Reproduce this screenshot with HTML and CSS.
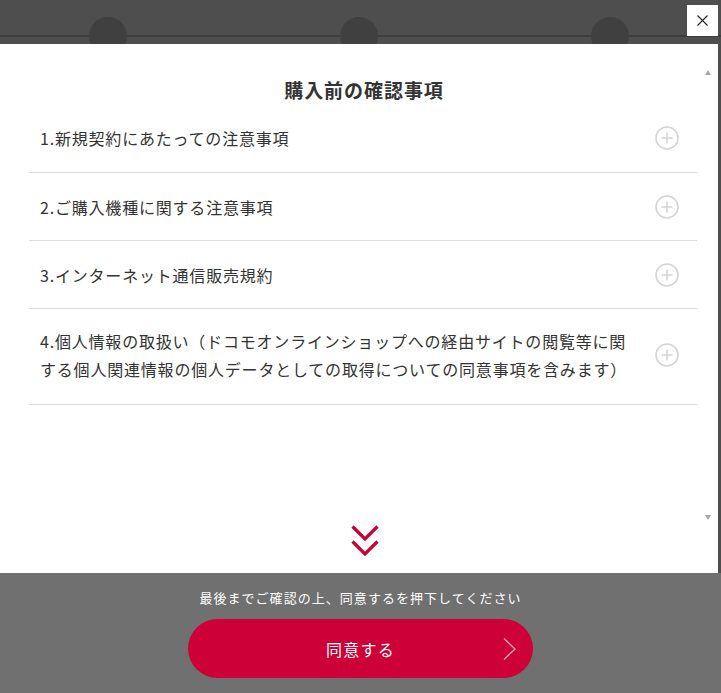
FILE: index.html
```html
<!DOCTYPE html>
<html lang="ja">
<head>
<meta charset="utf-8">
<title>購入前の確認事項</title>
<link rel="stylesheet" href="styles.css">
</head>
<body>
<div class="page">
  <header class="backdrop">
    <span class="dot"></span>
    <span class="dot"></span>
    <span class="dot"></span>
    <button class="close" aria-label="閉じる">
      <svg width="11" height="11" viewBox="0 0 11 11"><path d="M0.5 0.5 L10.5 10.5 M10.5 0.5 L0.5 10.5" stroke="#222" stroke-width="1.1" fill="none"/></svg>
    </button>
  </header>
  <main class="modal">
    <div class="content">
      <h1 class="title">購入前の確認事項</h1>
      <ul class="list">
        <li class="item"><span class="label">1.新規契約にあたっての注意事項</span><span class="plus"><svg width="24" height="24" viewBox="0 0 24 24"><circle cx="12" cy="12" r="11" stroke="#d4d4d4" stroke-width="1.6" fill="none"/><path d="M12 6.5 V17.5 M6.5 12 H17.5" stroke="#d4d4d4" stroke-width="1.6"/></svg></span></li>
        <li class="item"><span class="label">2.ご購入機種に関する注意事項</span><span class="plus"><svg width="24" height="24" viewBox="0 0 24 24"><circle cx="12" cy="12" r="11" stroke="#d4d4d4" stroke-width="1.6" fill="none"/><path d="M12 6.5 V17.5 M6.5 12 H17.5" stroke="#d4d4d4" stroke-width="1.6"/></svg></span></li>
        <li class="item"><span class="label">3.インターネット通信販売規約</span><span class="plus"><svg width="24" height="24" viewBox="0 0 24 24"><circle cx="12" cy="12" r="11" stroke="#d4d4d4" stroke-width="1.6" fill="none"/><path d="M12 6.5 V17.5 M6.5 12 H17.5" stroke="#d4d4d4" stroke-width="1.6"/></svg></span></li>
        <li class="item"><span class="label">4.個人情報の取扱い（ドコモオンラインショップへの経由サイトの閲覧等に関する個人関連情報の個人データとしての取得についての同意事項を含みます）</span><span class="plus"><svg width="24" height="24" viewBox="0 0 24 24"><circle cx="12" cy="12" r="11" stroke="#d4d4d4" stroke-width="1.6" fill="none"/><path d="M12 6.5 V17.5 M6.5 12 H17.5" stroke="#d4d4d4" stroke-width="1.6"/></svg></span></li>
      </ul>
      <div class="more">
        <svg width="28" height="31" viewBox="0 0 28 31"><path d="M1.5 1.5 L14 14 L26.5 1.5 M1.5 16.5 L14 29 L26.5 16.5" stroke="#cc0033" stroke-width="3.2" fill="none"/></svg>
      </div>
    </div>
    <div class="scrollbar">
      <span class="arrow up"></span>
      <span class="arrow down"></span>
    </div>
  </main>
  <footer class="footer">
    <p class="note">最後までご確認の上、同意するを押下してください</p>
    <button class="agree">
      <span>同意する</span>
      <svg class="chev" width="14" height="24" viewBox="0 0 14 24"><path d="M1 1.5 L12 12 L1 22.5" stroke="#f4a6bc" stroke-width="1.3" fill="none"/></svg>
    </button>
  </footer>
</div>
</body>
</html>
```
FILE: styles.css
```css
* { box-sizing: border-box; }
html, body {
  margin: 0;
  padding: 0;
}
body {
  background: #4d4d4d;
  font-family: "Noto Sans CJK JP", "Noto Sans", sans-serif;
  color: #333;
  overflow: hidden;
}
.page {
  width: 721px;
  height: 693px;
  display: flex;
  flex-direction: column;
}
.backdrop {
  position: relative;
  height: 44px;
  flex: none;
  overflow: hidden;
  display: flex;
  align-items: flex-start;
  gap: 213px;
  padding: 17px 0 0 89px;
  background: linear-gradient(to bottom, transparent 35px, #3e3e3e 35px, #3e3e3e 37px, transparent 37px), #4e4e4e;
}
.dot {
  width: 38px;
  height: 38px;
  border-radius: 50%;
  background: #404040;
  flex: none;
}
.close {
  position: absolute;
  top: 5px;
  left: 687px;
  width: 31px;
  height: 31px;
  padding: 0;
  border: 0;
  background: #fff;
  display: flex;
  align-items: center;
  justify-content: center;
}
.modal {
  width: 718px;
  height: 529px;
  flex: none;
  background: #fff;
  display: flex;
}
.content {
  flex: 1;
  display: flex;
  flex-direction: column;
  padding: 32px 0 0 29px;
}
.title {
  margin: 0;
  font-size: 19px;
  letter-spacing: 0.05em;
  line-height: 28px;
  font-weight: 700;
  text-align: center;
  padding-left: 2px;
}
.list {
  list-style: none;
  margin: 0;
  padding: 0;
}
.item {
  display: flex;
  align-items: center;
  border-bottom: 1px solid #dcdcdc;
  padding: 20px 18px 19px 11px;
  gap: 16px;
}
.item:first-child {
  padding-bottom: 20px;
}
.item:last-child {
  padding-top: 18px;
  padding-bottom: 21px;
}
.label {
  flex: 1;
  font-size: 16px;
  letter-spacing: 0.05em;
  line-height: 28px;
  color: #333;
}
.plus {
  flex: none;
  width: 24px;
  height: 24px;
  display: flex;
}
.more {
  margin-top: auto;
  display: flex;
  justify-content: center;
  padding: 0 0 17px 3px;
}
.scrollbar {
  width: 21px;
  flex: none;
  display: flex;
  flex-direction: column;
  align-items: center;
  justify-content: space-between;
  padding: 26px 0 53px;
}
.arrow {
  width: 0;
  height: 0;
  border-left: 3.5px solid transparent;
  border-right: 3.5px solid transparent;
}
.arrow.up {
  border-bottom: 5px solid #a8a8a8;
}
.arrow.down {
  border-top: 5px solid #a8a8a8;
}
.footer {
  flex: 1;
  background: #707070;
  display: flex;
  flex-direction: column;
  align-items: center;
  padding-top: 15px;
}
.note {
  margin: 0;
  color: #fff;
  font-size: 13px;
  letter-spacing: 0.08em;
  line-height: 20px;
}
.agree {
  margin-top: 11px;
  width: 345px;
  height: 59px;
  border: 0;
  border-radius: 30px;
  background: #cd0037;
  color: #fff;
  font-family: inherit;
  font-size: 16px;
  letter-spacing: 0.08em;
  position: relative;
  display: flex;
  align-items: center;
  justify-content: center;
  padding: 0;
}
.chev {
  position: absolute;
  right: 16px;
  top: 18px;
}
```
